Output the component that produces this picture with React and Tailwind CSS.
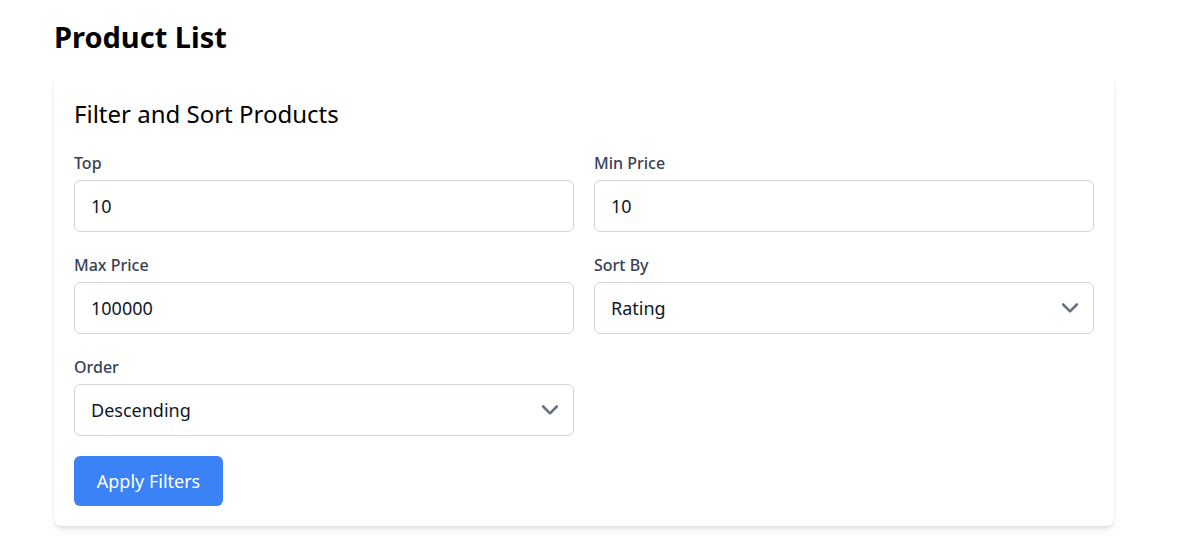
import React from 'react';

const Chevron = () => (
  <svg className="pointer-events-none absolute right-[14px] top-1/2 -translate-y-1/2 w-5 h-5 text-gray-500" viewBox="0 0 20 20" fill="none" stroke="currentColor" strokeWidth="2.6" strokeLinecap="round" strokeLinejoin="round">
    <path d="M3.2 6.5l6.8 6.8 6.8-6.8" />
  </svg>
);

const Field = ({ label, children }) => (
  <div className="flex flex-col">
    <label className="text-base leading-[22px] font-medium text-gray-700 mb-[6px]">{label}</label>
    {children}
  </div>
);

const inputCls = 'w-full h-[52px] px-4 border border-gray-300 rounded-md text-lg text-gray-900 bg-white outline-none';

const SelectBox = ({ value, options }) => (
  <div className="relative">
    <select defaultValue={value} className={inputCls + ' appearance-none pr-10'}>
      {options.map((o) => <option key={o}>{o}</option>)}
    </select>
    <Chevron />
  </div>
);

export default function App() {
  return (
    <div className="min-h-screen bg-white" style={{ fontFamily: '"Noto Sans", "Open Sans", sans-serif' }}>
      <div className="ml-[54px] w-[1060px] pt-[19px]">
        <h1 className="text-[29px] font-bold text-black leading-9 mb-[20px]">Product List</h1>

        <div className="bg-white rounded-lg shadow-md p-5">
          <h2 className="text-2xl leading-8 text-black mt-[3px] mb-[22px]">Filter and Sort Products</h2>

          <div className="grid grid-cols-2 gap-x-5 gap-y-[22px]">
            <Field label="Top">
              <input className={inputCls} defaultValue="10" />
            </Field>
            <Field label="Min Price">
              <input className={inputCls} defaultValue="10" />
            </Field>
            <Field label="Max Price">
              <input className={inputCls} defaultValue="100000" />
            </Field>
            <Field label="Sort By">
              <SelectBox value="Rating" options={['Price', 'Rating', 'Discount']} />
            </Field>
            <Field label="Order">
              <SelectBox value="Descending" options={['Ascending', 'Descending']} />
            </Field>
          </div>

          <button className="mt-5 h-[50px] w-[149px] rounded-md bg-[#3b82f6] text-white text-lg">Apply Filters</button>
        </div>
      </div>
    </div>
  );
}
